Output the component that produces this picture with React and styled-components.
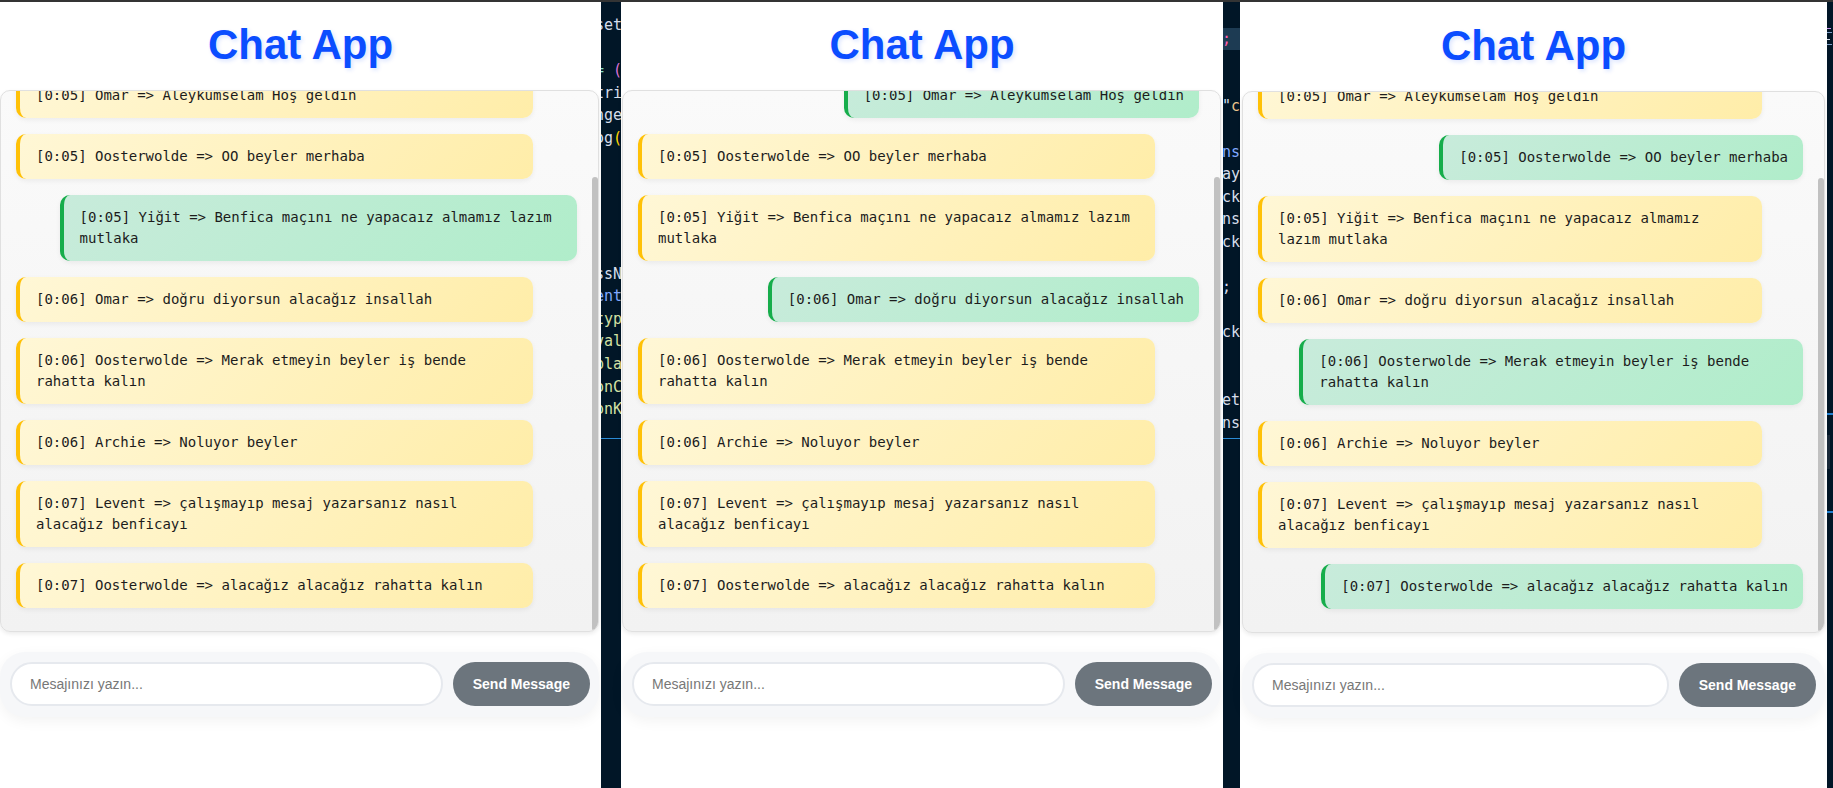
import { useLayoutEffect, useRef, useState } from "react";
import styled, { createGlobalStyle } from "styled-components";

// sayfa genel ayarlari
const GlobalStyle = createGlobalStyle`
  html, body {
    margin: 0;
    padding: 0;
    background: #011627;
  }
  body {
    font-family: "Liberation Sans", Arial, sans-serif;
  }
  * {
    box-sizing: border-box;
  }
`;

const MESSAGES = [
  { time: "0:05", user: "Yiğit", text: "Selamun aleyküm beyler" },
  { time: "0:05", user: "Omar", text: "Aleykumselam Hoş geldin" },
  { time: "0:05", user: "Oosterwolde", text: "OO beyler merhaba" },
  { time: "0:05", user: "Yiğit", text: "Benfica maçını ne yapacaız almamız lazım mutlaka" },
  { time: "0:06", user: "Omar", text: "doğru diyorsun alacağız insallah" },
  { time: "0:06", user: "Oosterwolde", text: "Merak etmeyin beyler iş bende rahatta kalın" },
  { time: "0:06", user: "Archie", text: "Noluyor beyler" },
  { time: "0:07", user: "Levent", text: "çalışmayıp mesaj yazarsanız nasıl alacağız benficayı" },
  { time: "0:07", user: "Oosterwolde", text: "alacağız alacağız rahatta kalın" },
];

// pencereler arasindan gorunen editor parcalari
const ATTR = "#d2e0a4";
const TXT = "#d6deeb";
const STRIP_LEFT = [
  [["set", TXT]],
  [],
  [["=", "#7fdbca"], [" ", TXT], ["(", "#da70d6"]],
  [["tri", TXT]],
  [["nge", TXT]],
  [["og", TXT], ["(", "#ffd700"]],
  [], [], [], [], [],
  [["ssN", TXT]],
  [["ent", "#82aaff"]],
  [["typ", ATTR]],
  [["val", ATTR]],
  [["pla", ATTR]],
  [["onC", ATTR]],
  [["onK", ATTR]],
];
const STRIP_MID = [
  [[";", "#ff5fa8"]],
  [], [],
  [['"', TXT], ["c", "#ecc48d"]],
  [],
  [["ns", "#82aaff"]],
  [["ay", TXT]],
  [["ck", TXT]],
  [["ns", TXT]],
  [["ck", TXT]],
  [],
  [[";", TXT]],
  [],
  [["ck", TXT]],
  [], [],
  [["et", TXT]],
  [["ns", TXT]],
];

const Page = styled.div`
  width: 1833px;
  height: 788px;
  overflow: hidden;
  display: flex;
  flex-direction: column;
  background: #011627;
`;

const TopBar = styled.div`
  height: 2px;
  flex-shrink: 0;
  background: #343434;
`;

const Row = styled.div`
  flex: 1;
  display: flex;
`;

// editor seridi
const Strip = styled.div`
  flex: 0 0 ${(p) => p.$w}px;
  overflow: hidden;
  background: #011627;
  padding-top: ${(p) => p.$top}px;
  font: 15px/22.6px "DejaVu Sans Mono", monospace;
  white-space: pre;
`;

const CodeLine = styled.div`
  height: 22.6px;
  margin-left: ${(p) => p.$shift}px;
  background: ${(p) => (p.$hl ? "#1d3b53" : "transparent")};
`;

const Tok = styled.span`
  color: ${(p) => p.$c};
`;

const PanelLine = styled.div`
  height: 1px;
  margin-top: ${(p) => p.$gap}px;
  background: #2a8bd6;
`;

const Mark = styled.div`
  height: ${(p) => p.$h}px;
  width: ${(p) => p.$w}px;
  margin-top: ${(p) => p.$gap}px;
  background: ${(p) => p.$c};
`;

// chat penceresi
const Window = styled.div`
  flex: 0 0 ${(p) => p.$w}px;
  display: flex;
  flex-direction: column;
  background: #fff;
  padding-top: ${(p) => p.$shift}px;
`;

const Header = styled.div`
  height: 88px;
  flex-shrink: 0;
`;

const Title = styled.h1`
  margin: 0;
  padding-top: 19px;
  text-align: center;
  font: 700 42px/48px "Liberation Sans", Arial, sans-serif;
  color: #0b4dff;
  text-shadow: 2px 2px 4px rgba(11, 77, 255, 0.15);
`;

const ChatBox = styled.div`
  position: relative;
  height: 542px;
  flex-shrink: 0;
  margin: 0 2px 0 ${(p) => p.$ml}px;
  overflow: hidden;
  border: 1px solid #e0e0e0;
  border-radius: 10px;
  background: linear-gradient(to bottom, #fafafa, #f2f2f2);
  box-shadow: 0 2px 4px rgba(0, 0, 0, 0.08);
`;

// kaydirilan mesaj listesi, sag tarafta cubuk icin 6px yer birakiyor
const MessageList = styled.div`
  height: 100%;
  padding: 15px 21px 15px 15px;
  display: flex;
  flex-direction: column;
  overflow-y: auto;
  scrollbar-width: none;

  &::-webkit-scrollbar {
    display: none;
  }
`;

const ScrollThumb = styled.div`
  position: absolute;
  right: 0;
  width: 6px;
  border-radius: 3px;
  background: #c1c1c1;
`;

// kendi mesajim sagda ve icerigi kadar, digerleri solda sabit genislikte
const Bubble = styled.div`
  box-sizing: content-box;
  flex-shrink: 0;
  align-self: ${(p) => (p.$own ? "flex-end" : "flex-start")};
  width: ${(p) => (p.$own ? "auto" : "86%")};
  max-width: 86%;
  margin: 8px 0;
  padding: 12px 15px 12px 16px;
  border-left: 4px solid ${(p) => (p.$own ? "#16ad4b" : "#ffc107")};
  border-radius: 10px;
  background: ${(p) =>
    p.$own
      ? "linear-gradient(135deg, #c8ebdb 0%, #b0edca 100%)"
      : "linear-gradient(135deg, #fff7d6 0%, #ffeda8 100%)"};
  box-shadow: 0 2px 5px rgba(0, 0, 0, 0.06);
  font: 14px/21px "DejaVu Sans Mono", monospace;
  color: #1c1c1c;
  overflow-wrap: break-word;
`;

const InputBar = styled.div`
  flex-shrink: 0;
  display: flex;
  gap: 10px;
  margin: 20px 2px 0 ${(p) => p.$ml}px;
  padding: 10px 9px 11px 10px;
  border-radius: 25px;
  background: #f6f7f9;
  box-shadow: 0 4px 14px rgba(0, 0, 0, 0.05);
`;

const MessageInput = styled.input`
  flex: 1;
  min-width: 0;
  height: 44px;
  padding: 0 18px;
  border: 2px solid #e6e9ee;
  border-radius: 22px;
  background: #fff;
  outline: none;
  font: 14px "Liberation Sans", Arial, sans-serif;
  color: #333;

  &::placeholder {
    color: #777;
  }
`;

const SendButton = styled.button`
  height: 44px;
  padding: 0 20px;
  border: none;
  border-radius: 22px;
  background: #6c757d;
  color: #fff;
  font: 700 14px "Liberation Sans", Arial, sans-serif;
  cursor: pointer;
`;

function CodeStrip({ w, top, shift, lines, hlFirst, gap }) {
  return (
    <Strip $w={w} $top={top}>
      {lines.map((line, i) => (
        <CodeLine key={i} $shift={shift} $hl={hlFirst && i === 0}>
          {line.map(([t, c], j) => (
            <Tok key={j} $c={c}>{t}</Tok>
          ))}
        </CodeLine>
      ))}
      <PanelLine $gap={gap} />
    </Strip>
  );
}

function ChatWindow({ me, w, ml, shift }) {
  const listRef = useRef(null);
  const [thumb, setThumb] = useState({ top: 0, height: 0 });

  // yeni mesajlar gorunsun diye en alta kaydir, cubugu hesapla
  useLayoutEffect(() => {
    const el = listRef.current;
    if (!el) return;
    el.scrollTop = el.scrollHeight;
    const ratio = el.clientHeight / el.scrollHeight;
    setThumb({
      top: el.scrollTop * ratio,
      height: el.clientHeight * ratio,
    });
  }, []);

  return (
    <Window $w={w} $shift={shift}>
      <Header>
        <Title>Chat App</Title>
      </Header>
      <ChatBox $ml={ml}>
        <MessageList ref={listRef}>
          {MESSAGES.map((m, i) => (
            <Bubble key={i} $own={m.user === me}>
              [{m.time}] {m.user} =&gt; {m.text}
            </Bubble>
          ))}
        </MessageList>
        <ScrollThumb style={{ top: thumb.top, height: thumb.height }} />
      </ChatBox>
      <InputBar $ml={ml}>
        <MessageInput placeholder="Mesajınızı yazın..." />
        <SendButton>Send Message</SendButton>
      </InputBar>
    </Window>
  );
}

export default function App() {
  return (
    <>
      <GlobalStyle />
      <Page>
        <TopBar />
        <Row>
          <ChatWindow me="Yiğit" w={601} ml={0} shift={0} />
          <CodeStrip w={20} top={12} shift={-6} lines={STRIP_LEFT} gap={17} />
          <ChatWindow me="Omar" w={602} ml={1} shift={0} />
          <CodeStrip w={17} top={25.7} shift={-1} lines={STRIP_MID} hlFirst gap={3.5} />
          <ChatWindow me="Oosterwolde" w={587} ml={2} shift={1} />
          <Strip $w={6} $top={26}>
            <Mark $h={1} $w={4} $gap={0} $c="#c792ea" />
            <Mark $h={1} $w={5} $gap={3} $c="#7fa0c8" />
            <Mark $h={1} $w={3} $gap={6} $c="#d6deeb" />
            <Mark $h={1} $w={5} $gap={4} $c="#7fa0c8" />
            <Mark $h={2} $w={6} $gap={368} $c="#1f7fd0" />
            <Mark $h={34} $w={3} $gap={20} $c="#1a2a3a" />
            <Mark $h={2} $w={6} $gap={42} $c="#1f7fd0" />
          </Strip>
        </Row>
      </Page>
    </>
  );
}
